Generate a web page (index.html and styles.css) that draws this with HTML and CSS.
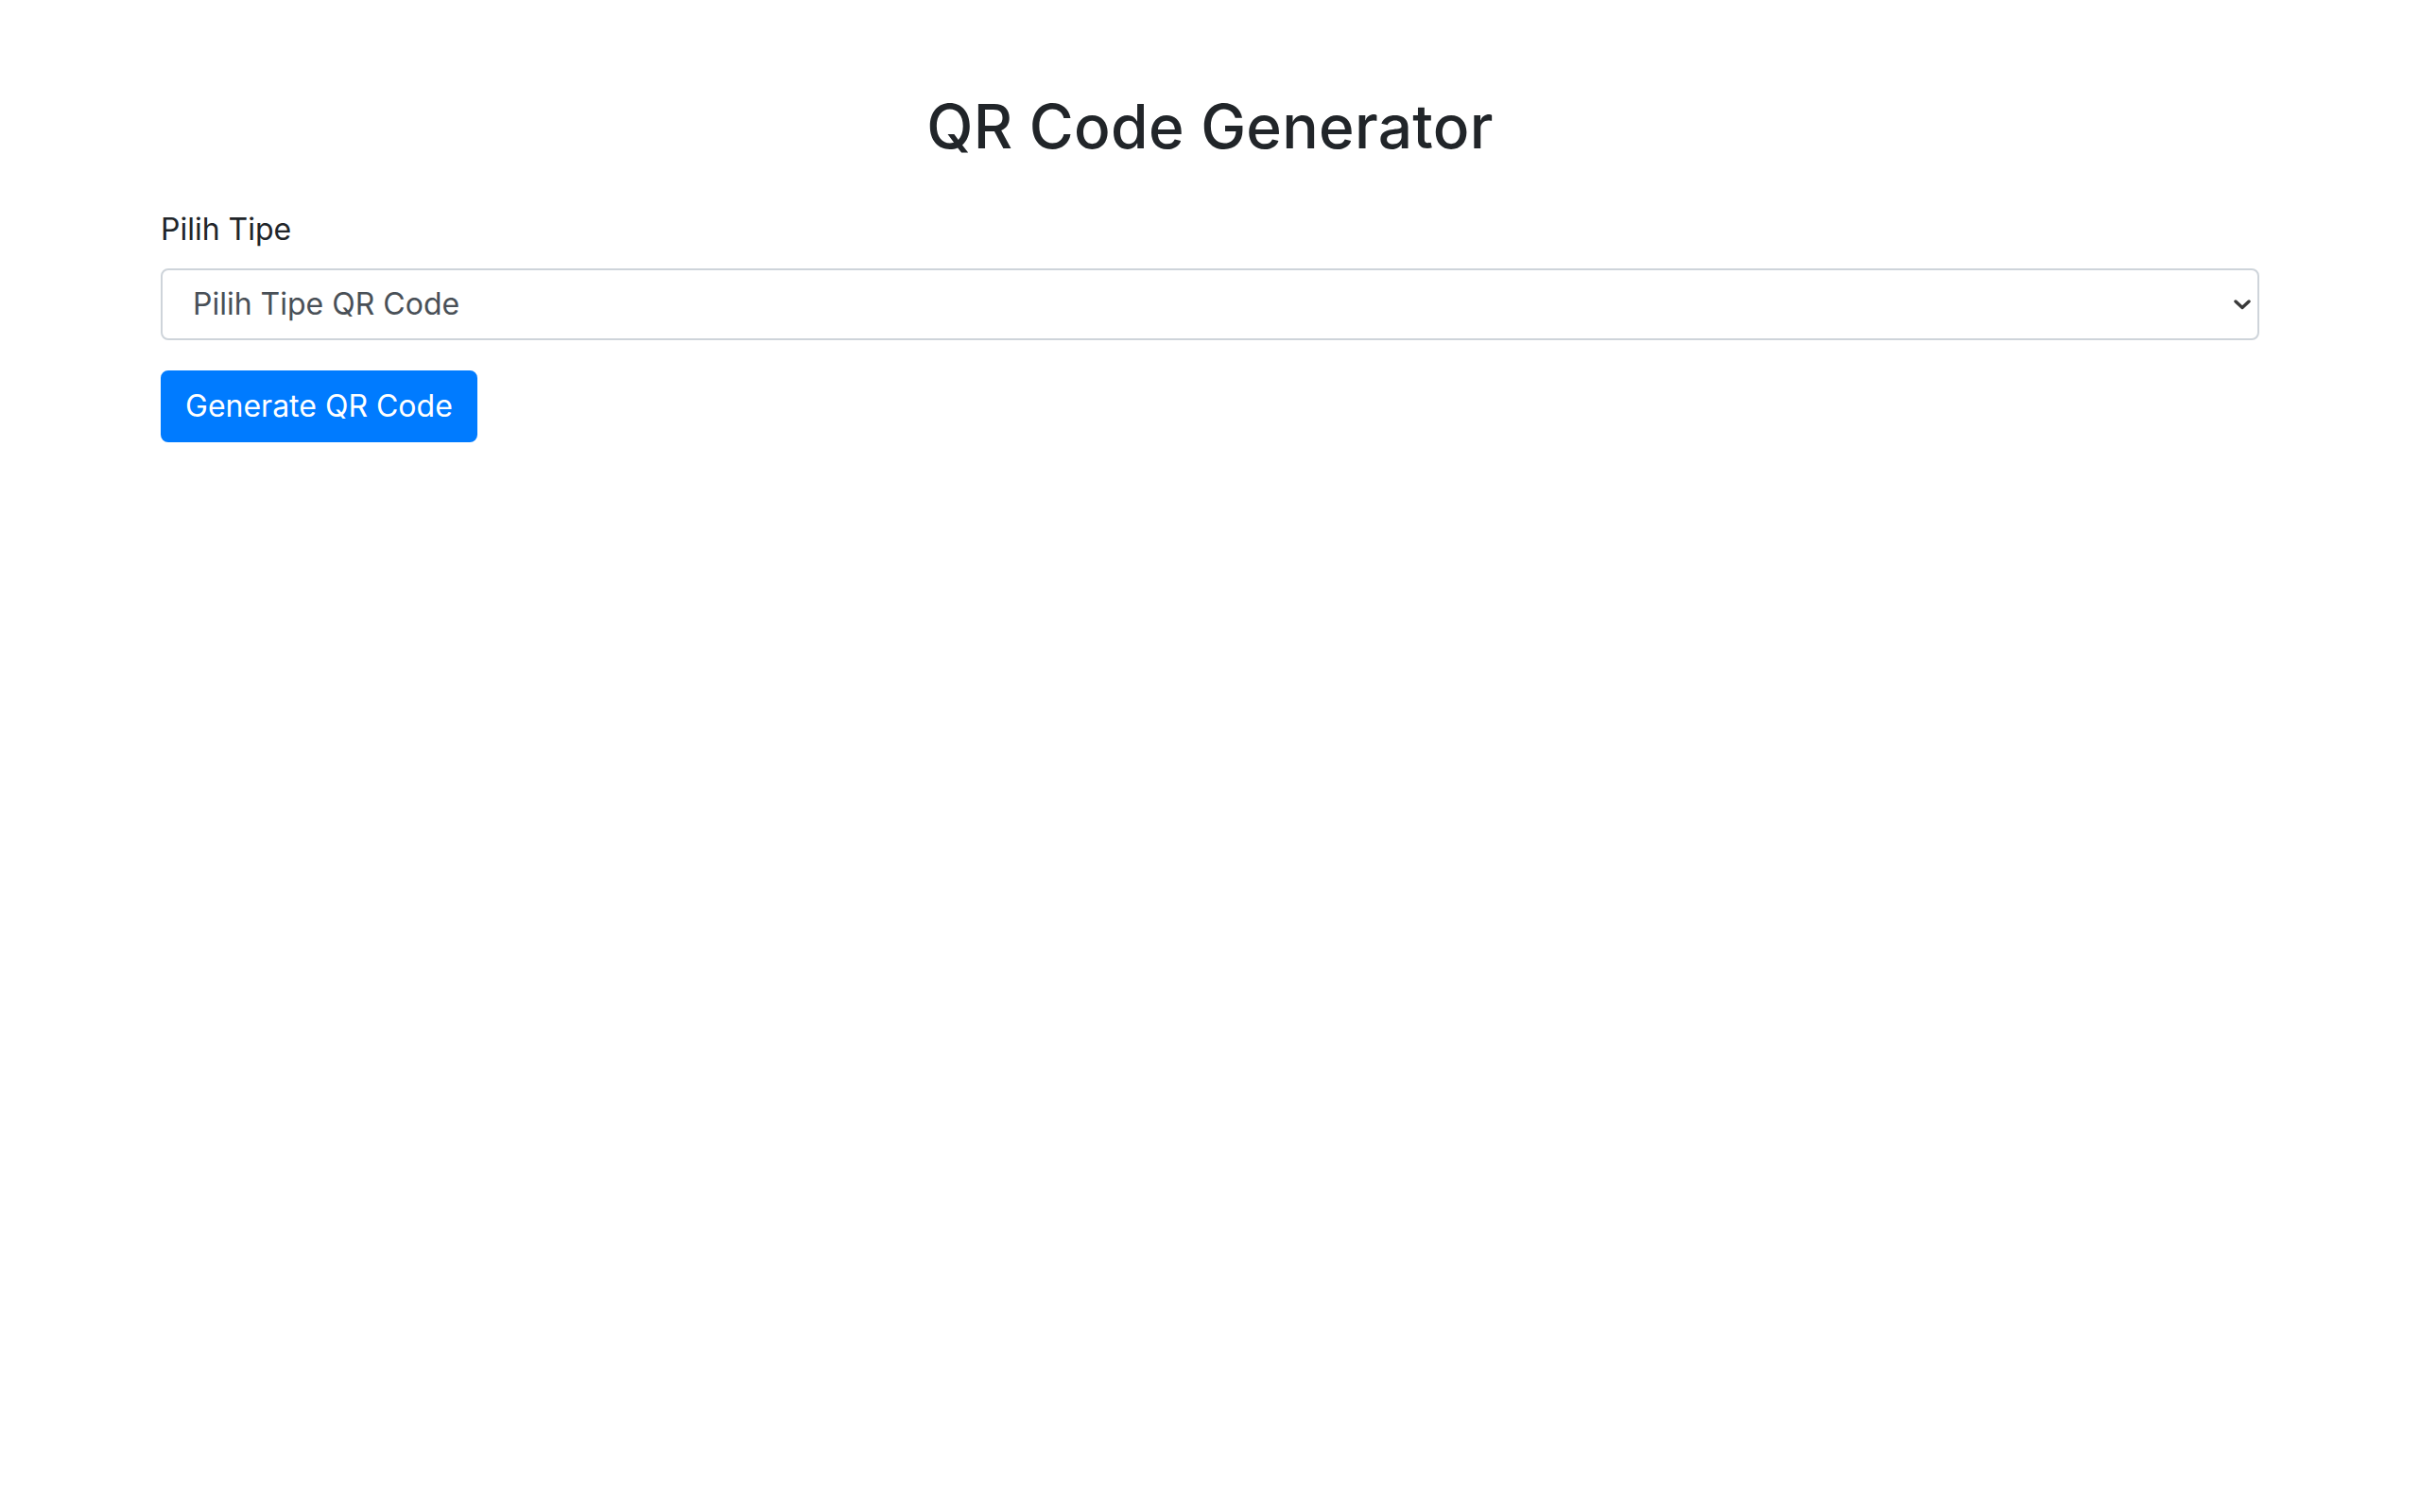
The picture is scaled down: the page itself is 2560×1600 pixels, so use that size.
FILE: index.html
```html
<!DOCTYPE html>
<html>
<head>
<meta charset="UTF-8">
<title>QR Code Generator</title>
<link rel="stylesheet" href="styles.css">
</head>
<body>
<div class="container">
	<h2 class="title">QR Code Generator</h2>
	<form class="qr-form">
		<div class="form-group">
			<label for="tipe">Pilih Tipe</label>
			<div class="select-wrap">
				<select id="tipe" class="form-control">
					<option value="">Pilih Tipe QR Code</option>
					<option value="url">URL</option>
					<option value="text">Text</option>
				</select>
				<svg class="chevron" width="18" height="11" viewBox="0 0 18 11">
					<path d="M2 2 L9 8.5 L16 2" fill="none" stroke="#3a3a3a" stroke-width="3.4" stroke-linecap="round" stroke-linejoin="round"/>
				</svg>
			</div>
		</div>
		<button type="button" class="btn">Generate QR Code</button>
	</form>
</div>
</body>
</html>
```

FILE: styles.css
```css
html, body {
	margin: 0;
	padding: 0;
	background-color: #fff;
}

body {
	font-family: Inter, "Noto Sans", "Liberation Sans", sans-serif;
	font-size: 32px;
	line-height: 1.5;
	color: #212529;
}

.container {
	max-width: 2280px;
	margin: 0 auto;
	padding: 96px 30px 0 30px;
	box-sizing: border-box;
}

.title {
	font-size: 64px;
	font-weight: 500;
	line-height: 1.2;
	text-align: center;
	margin: 0 0 46px 0;
	letter-spacing: 0.3px;
}

.form-group {
	margin-bottom: 32px;
}

label {
	display: inline-block;
	margin-bottom: 17px;
}

.select-wrap {
	position: relative;
}

.form-control {
	display: block;
	width: 100%;
	height: 76px;
	box-sizing: border-box;
	padding: 0 24px 0 32px;
	font-family: inherit;
	font-size: 32px;
	color: #495057;
	background-color: #fff;
	border: 2px solid #ced4da;
	border-radius: 8px;
	-webkit-appearance: none;
	appearance: none;
	outline: none;
}

.chevron {
	position: absolute;
	right: 9px;
	top: 33px;
}

.btn {
	display: inline-block;
	height: 76px;
	padding: 0 24px;
	font-family: inherit;
	font-size: 32px;
	line-height: 1.5;
	color: #fff;
	background-color: #007bff;
	border: 2px solid #007bff;
	border-radius: 8px;
	cursor: pointer;
}
```
